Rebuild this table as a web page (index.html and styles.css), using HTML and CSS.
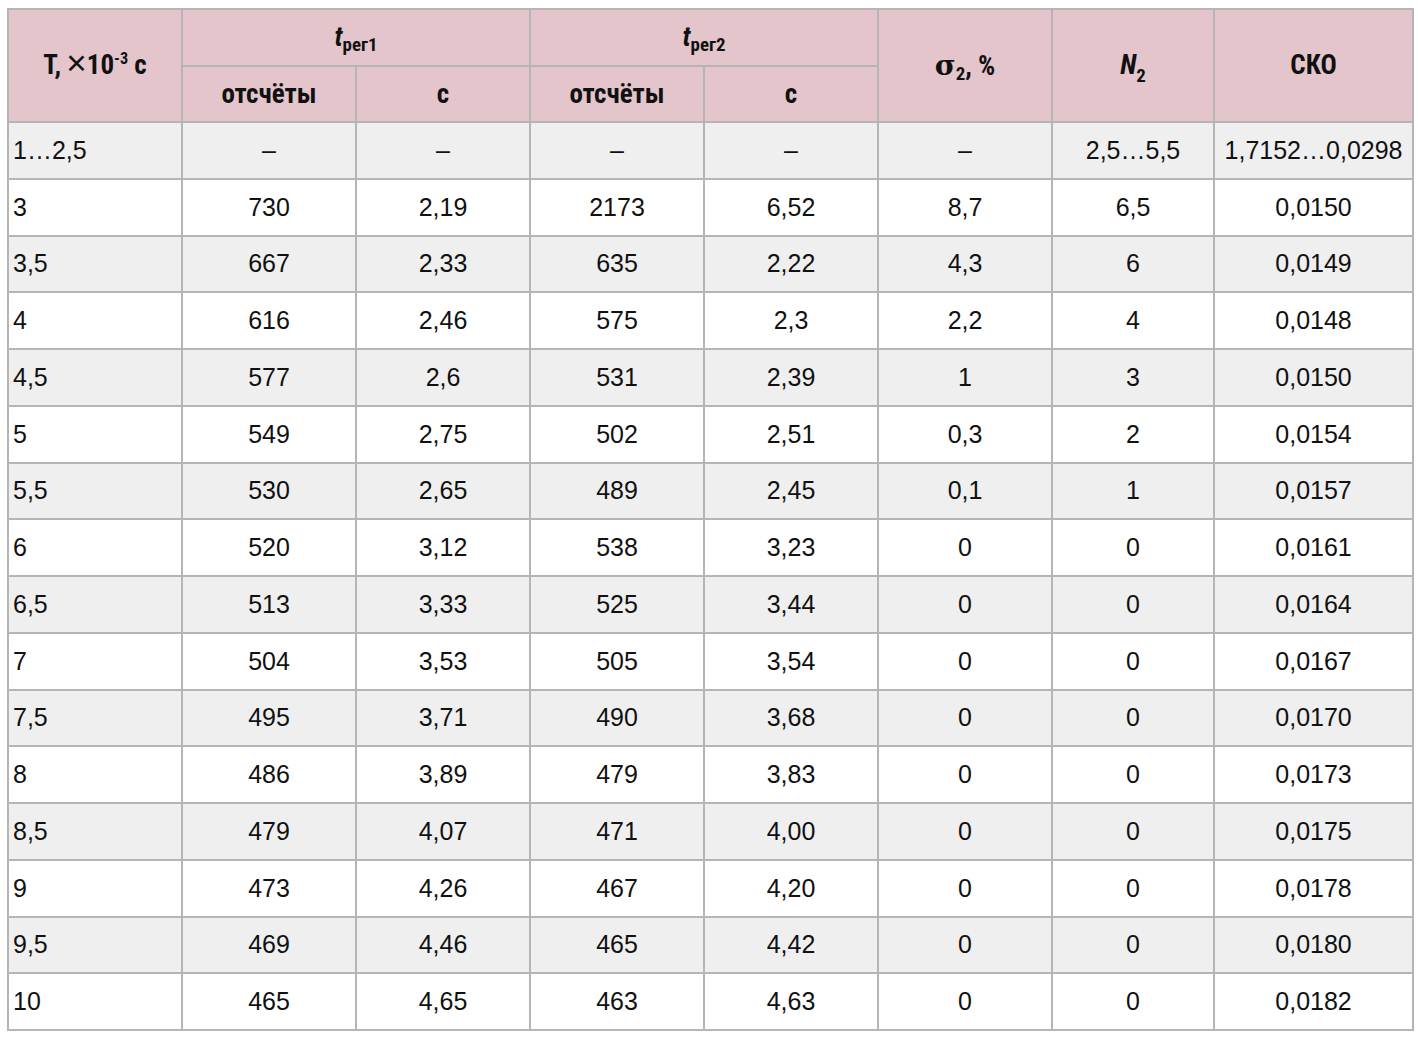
FILE: index.html
```html
<!DOCTYPE html>
<html lang="ru">
<head>
<meta charset="utf-8">
<title>Таблица</title>
<link rel="stylesheet" href="styles.css">
</head>
<body>
<div class="wrap">
<table class="data">
  <colgroup>
    <col class="c174"><col class="c174"><col class="c174"><col class="c174"><col class="c174"><col class="c174"><col class="c162"><col class="c199">
  </colgroup>
  <thead>
    <tr class="h1">
      <th rowspan="2">T,&thinsp;<span class="times">×</span>10<sup>-3</sup> с</th>
      <th colspan="2"><i class="var">t</i><sub>рег1</sub></th>
      <th colspan="2"><i class="var">t</i><sub>рег2</sub></th>
      <th rowspan="2"><span class="sigma">σ</span><sub>2</sub>, %</th>
      <th rowspan="2"><i class="var">N</i><sub class="nsub">2</sub></th>
      <th rowspan="2">СКО</th>
    </tr>
    <tr class="h2">
      <th>отсчёты</th>
      <th>с</th>
      <th>отсчёты</th>
      <th>с</th>
    </tr>
  </thead>
  <tbody>
    <tr><td>1…2,5</td><td>–</td><td>–</td><td>–</td><td>–</td><td>–</td><td>2,5…5,5</td><td>1,7152…0,0298</td></tr>
    <tr><td>3</td><td>730</td><td>2,19</td><td>2173</td><td>6,52</td><td>8,7</td><td>6,5</td><td>0,0150</td></tr>
    <tr><td>3,5</td><td>667</td><td>2,33</td><td>635</td><td>2,22</td><td>4,3</td><td>6</td><td>0,0149</td></tr>
    <tr><td>4</td><td>616</td><td>2,46</td><td>575</td><td>2,3</td><td>2,2</td><td>4</td><td>0,0148</td></tr>
    <tr><td>4,5</td><td>577</td><td>2,6</td><td>531</td><td>2,39</td><td>1</td><td>3</td><td>0,0150</td></tr>
    <tr><td>5</td><td>549</td><td>2,75</td><td>502</td><td>2,51</td><td>0,3</td><td>2</td><td>0,0154</td></tr>
    <tr><td>5,5</td><td>530</td><td>2,65</td><td>489</td><td>2,45</td><td>0,1</td><td>1</td><td>0,0157</td></tr>
    <tr><td>6</td><td>520</td><td>3,12</td><td>538</td><td>3,23</td><td>0</td><td>0</td><td>0,0161</td></tr>
    <tr><td>6,5</td><td>513</td><td>3,33</td><td>525</td><td>3,44</td><td>0</td><td>0</td><td>0,0164</td></tr>
    <tr><td>7</td><td>504</td><td>3,53</td><td>505</td><td>3,54</td><td>0</td><td>0</td><td>0,0167</td></tr>
    <tr><td>7,5</td><td>495</td><td>3,71</td><td>490</td><td>3,68</td><td>0</td><td>0</td><td>0,0170</td></tr>
    <tr><td>8</td><td>486</td><td>3,89</td><td>479</td><td>3,83</td><td>0</td><td>0</td><td>0,0173</td></tr>
    <tr><td>8,5</td><td>479</td><td>4,07</td><td>471</td><td>4,00</td><td>0</td><td>0</td><td>0,0175</td></tr>
    <tr><td>9</td><td>473</td><td>4,26</td><td>467</td><td>4,20</td><td>0</td><td>0</td><td>0,0178</td></tr>
    <tr><td>9,5</td><td>469</td><td>4,46</td><td>465</td><td>4,42</td><td>0</td><td>0</td><td>0,0180</td></tr>
    <tr><td>10</td><td>465</td><td>4,65</td><td>463</td><td>4,63</td><td>0</td><td>0</td><td>0,0182</td></tr>
  </tbody>
</table>
</div>
</body>
</html>
```
FILE: styles.css
```css
html, body {
  margin: 0;
  padding: 0;
  background: #ffffff;
}
.wrap {
  padding: 8px 0 0 7px;
}
.data {
  border-collapse: collapse;
  table-layout: fixed;
  width: 1406px;
  font-family: "Liberation Sans", Arial, sans-serif;
  font-size: 25px;
  color: #111111;
  border: 2px solid #b5b5b5;
}
.c174 { width: 174px; }
.c162 { width: 162px; }
.c199 { width: 199px; }
.data th, .data td {
  border: 2px solid #b5b5b5;
  text-align: center;
  vertical-align: middle;
  padding: 0;
  line-height: 1;
}
.data th {
  font-family: "Roboto Condensed", "Liberation Sans Narrow", sans-serif;
  font-size: 27px;
  background: #e3c5cb;
  font-weight: bold;
}
.h1 th {
  height: 55px;
}
.h2 th {
  height: 54px;
}
.data td {
  height: 54.75px;
}
.data tbody tr:nth-child(odd) td {
  background: #efefef;
}
.data tbody tr:nth-child(even) td {
  background: #ffffff;
}
.data tbody td:first-child {
  text-align: left;
  padding-left: 4px;
}
.times {
  font-family: "Liberation Sans", sans-serif;
  font-weight: normal;
  font-size: 1.3em;
  line-height: 0;
  vertical-align: -0.04em;
}
.data sup {
  font-size: 0.6em;
  vertical-align: 0.6em;
  line-height: 0;
}
.data sub {
  font-size: 0.7em;
  vertical-align: -0.25em;
  line-height: 0;
}
.data .nsub {
  vertical-align: -0.4em;
}
.var {
  font-style: italic;
}
.sigma {
  font-family: "DejaVu Serif", serif;
  font-weight: bold;
  font-size: 1.05em;
}
```
